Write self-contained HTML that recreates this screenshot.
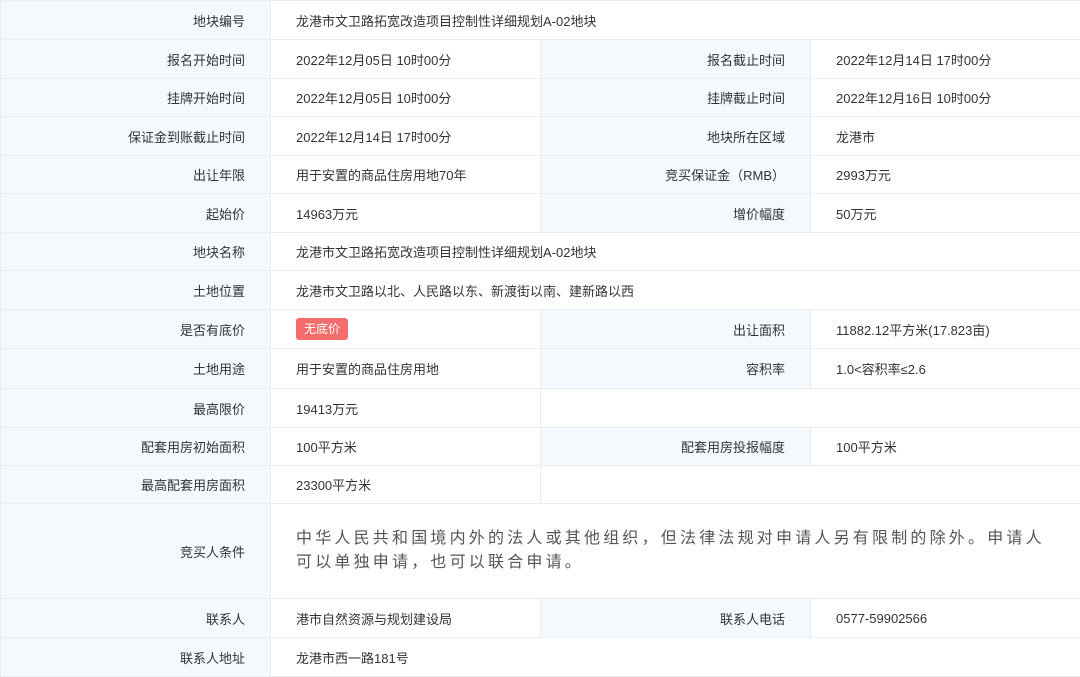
<!DOCTYPE html>
<html><head><meta charset="utf-8"><style>
html,body{margin:0;padding:0;background:#fff;}
body{width:1080px;height:676px;overflow:hidden;font-family:"Liberation Sans","Noto Sans CJK SC",sans-serif;font-size:13px;color:#333;}
table{border-collapse:collapse;width:1080px;table-layout:fixed;}
td{border:1px solid #e8edf1;padding:0;vertical-align:middle;}
td.l{background:#f3f9fd;text-align:right;padding-right:25px;}
td.v{padding-left:25px;}
.b{display:inline-block;background:#f56c6c;color:#fff;font-size:12px;padding:0 8px;height:22px;line-height:22px;border-radius:3px;}
.big{font-size:16px;letter-spacing:3.2px;color:#555;line-height:24px;padding-right:30px;}
</style></head><body>
<table>
<colgroup><col style="width:270px"><col style="width:270px"><col style="width:270px"><col style="width:270px"></colgroup>
<tr style="height:39px"><td class="l">地块编号</td><td class="v" colspan="3">龙港市文卫路拓宽改造项目控制性详细规划A-02地块</td></tr>
<tr style="height:39px"><td class="l">报名开始时间</td><td class="v">2022年12月05日 10时00分</td><td class="l">报名截止时间</td><td class="v">2022年12月14日 17时00分</td></tr>
<tr style="height:38px"><td class="l">挂牌开始时间</td><td class="v">2022年12月05日 10时00分</td><td class="l">挂牌截止时间</td><td class="v">2022年12月16日 10时00分</td></tr>
<tr style="height:39px"><td class="l">保证金到账截止时间</td><td class="v">2022年12月14日 17时00分</td><td class="l">地块所在区域</td><td class="v">龙港市</td></tr>
<tr style="height:38px"><td class="l">出让年限</td><td class="v">用于安置的商品住房用地70年</td><td class="l">竞买保证金（RMB）</td><td class="v">2993万元</td></tr>
<tr style="height:39px"><td class="l">起始价</td><td class="v">14963万元</td><td class="l">增价幅度</td><td class="v">50万元</td></tr>
<tr style="height:38px"><td class="l">地块名称</td><td class="v" colspan="3">龙港市文卫路拓宽改造项目控制性详细规划A-02地块</td></tr>
<tr style="height:39px"><td class="l">土地位置</td><td class="v" colspan="3">龙港市文卫路以北、人民路以东、新渡街以南、建新路以西</td></tr>
<tr style="height:39px"><td class="l">是否有底价</td><td class="v"><span class="b">无底价</span></td><td class="l">出让面积</td><td class="v">11882.12平方米(17.823亩)</td></tr>
<tr style="height:40px"><td class="l">土地用途</td><td class="v">用于安置的商品住房用地</td><td class="l">容积率</td><td class="v">1.0&lt;容积率≤2.6</td></tr>
<tr style="height:39px"><td class="l">最高限价</td><td class="v">19413万元</td><td colspan="2"></td></tr>
<tr style="height:38px"><td class="l">配套用房初始面积</td><td class="v">100平方米</td><td class="l">配套用房投报幅度</td><td class="v">100平方米</td></tr>
<tr style="height:38px"><td class="l">最高配套用房面积</td><td class="v">23300平方米</td><td colspan="2"></td></tr>
<tr style="height:95px"><td class="l">竞买人条件</td><td class="v big" colspan="3">中华人民共和国境内外的法人或其他组织，但法律法规对申请人另有限制的除外。申请人可以单独申请，也可以联合申请。</td></tr>
<tr style="height:39px"><td class="l">联系人</td><td class="v">港市自然资源与规划建设局</td><td class="l">联系人电话</td><td class="v">0577-59902566</td></tr>
<tr style="height:39px"><td class="l">联系人地址</td><td class="v" colspan="3">龙港市西一路181号</td></tr>
</table>
</body></html>
